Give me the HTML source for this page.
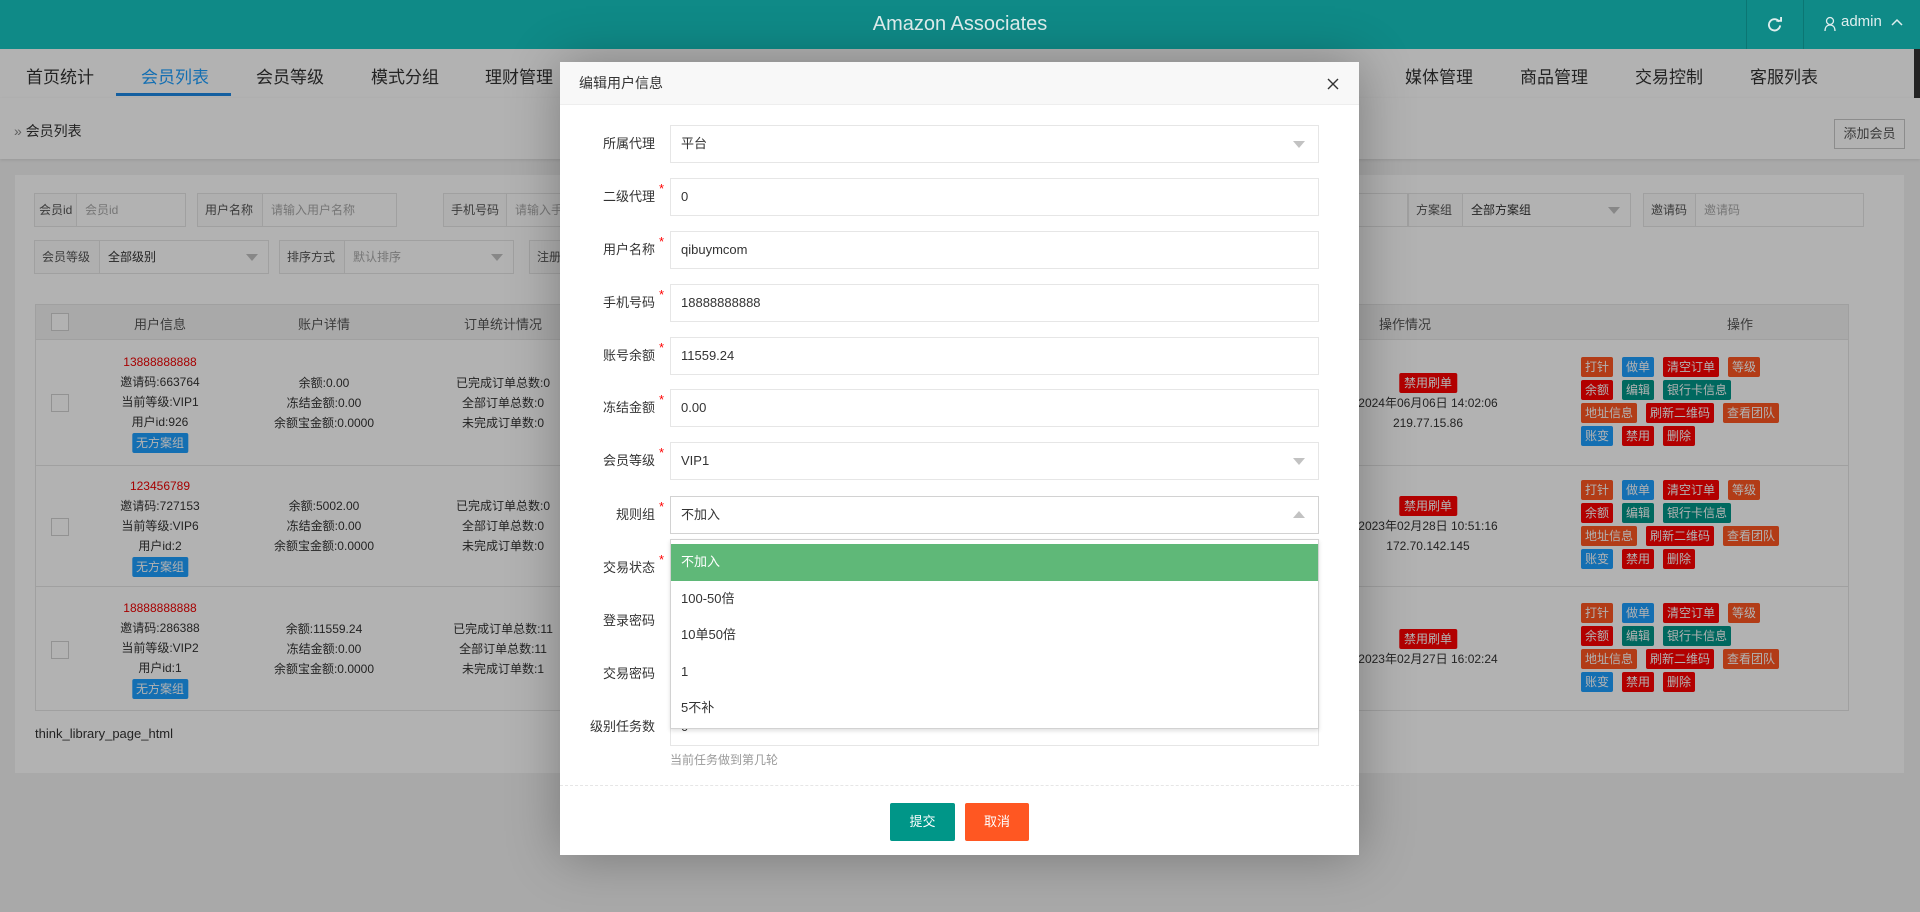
<!DOCTYPE html>
<html><head><meta charset="utf-8">
<style>
*{margin:0;padding:0;box-sizing:border-box}
body{width:1920px;height:912px;overflow:hidden;position:relative;background:#f2f2f2;font-family:"Liberation Sans","Noto Sans CJK SC",sans-serif;color:#333;font-size:13px}
.a{position:absolute}
.hdr{left:0;top:0;width:1920px;height:49px;background:#0f8a87;z-index:5}
.hdr .t{left:0;width:1920px;top:0;line-height:49px;text-align:center;color:#dfeeee;font-size:20px}
.sep{top:0;width:1px;height:49px;background:#0b7673}
.nav{left:0;top:49px;width:1920px;height:49px;background:#fff}
.nav span{position:absolute;top:14px;font-size:17px;color:#333}
.bc{left:0;top:98px;width:1920px;height:61px;background:#fff;box-shadow:0 1px 3px rgba(0,0,0,.1)}
.card{left:15px;top:175px;width:1889px;height:598px;background:#fff}
.f{height:34px;border:1px solid #e6e6e6;background:#fff;font-size:12px;white-space:nowrap}
.f .l{position:absolute;left:0;top:0;height:32px;line-height:32px;padding-left:7px;border-right:1px solid #e6e6e6;background:#fbfbfb;color:#555;white-space:nowrap;overflow:hidden}
.f .v{position:absolute;top:0;line-height:32px;color:#aaa}
.f .v.d{color:#333}
.tri{position:absolute;width:0;height:0;border-left:6px solid transparent;border-right:6px solid transparent;border-top:7px solid #c2c2c2}
.th{left:35px;top:304px;width:1814px;height:36px;background:#f2f2f2;border:1px solid #e6e6e6}
.th span{position:absolute;top:9px;font-size:13px;color:#555;transform:translateX(-50%)}
.row{left:35px;width:1814px;border:1px solid #e6e6e6;border-top:none}
.cb{position:absolute;left:15px;width:18px;height:18px;border:1px solid #d2d2d2;background:#fff}
.col{position:absolute;top:0;bottom:0;display:flex;flex-direction:column;justify-content:center;align-items:center;font-size:12px;line-height:20px;color:#333;transform:translateX(-50%);white-space:nowrap}
.btn{display:inline-block;height:20px;line-height:20px;padding:0 4px;color:#fff;font-size:12px;border-radius:2px}
.acts{position:absolute;left:1545px;top:0;bottom:0;display:flex;flex-direction:column;justify-content:center;width:220px}
.acts div{height:23px}
.acts .btn{margin-right:9px}
.o{background:#ff5722}.b{background:#1e9fff}.r{background:#f00}.g{background:#009688}
.shade{left:0;top:49px;width:1920px;height:863px;background:rgba(0,0,0,.3);z-index:3}
.modal{left:560px;top:62px;width:799px;height:793px;background:#fff;z-index:10;box-shadow:1px 1px 50px rgba(0,0,0,.3)}
.mt{left:0;top:0;width:799px;height:43px;background:#f8f8f8;border-bottom:1px solid #eee;line-height:43px;padding-left:19px;font-size:14px;color:#333}
.lab{position:absolute;right:704px;width:120px;text-align:right;font-size:13px;color:#333;line-height:38px}
.lab i{position:absolute;right:-9px;top:-8px;color:#f00;font-style:normal;font-size:13px}
.inp{position:absolute;left:110px;width:649px;height:38px;border:1px solid #e6e6e6;background:#fff;line-height:36px;padding-left:10px;font-size:13px;color:#333}
.dd{left:110px;top:477px;width:649px;height:190px;border:1px solid #d2d2d2;background:#fff;box-shadow:0 2px 4px rgba(0,0,0,.12);z-index:2}
.dd div{height:36.6px;line-height:36px;padding-left:10px;font-size:13px;color:#333}
</style></head><body>
<div class="a hdr">
 <div class="a t">Amazon Associates</div>
 <div class="a sep" style="left:1746px"></div>
 <div class="a sep" style="left:1803px"></div>
 <svg class="a" style="left:1767px;top:17px" width="15" height="15" viewBox="0 0 16 16"><path d="M13 5A6 6 0 1 0 14 9" fill="none" stroke="#dfeeee" stroke-width="2"/><path d="M10 4h5V-1" fill="none" stroke="#dfeeee" stroke-width="2"/></svg>
 <svg class="a" style="left:1824px;top:16px" width="12" height="16" viewBox="0 0 12 16"><circle cx="6" cy="5" r="3.5" fill="none" stroke="#dfeeee" stroke-width="1.3"/><path d="M1 15c0-4 2-6 5-6s5 2 5 6" fill="none" stroke="#dfeeee" stroke-width="1.3"/></svg>
 <div class="a" style="left:1841px;top:13px;color:#dfeeee;font-size:15px">admin</div>
 <svg class="a" style="left:1891px;top:18px" width="12" height="8" viewBox="0 0 12 8"><path d="M1 7L6 2l5 5" fill="none" stroke="#dfeeee" stroke-width="1.5"/></svg>
</div>
<div class="a nav">
 <span style="left:26px">首页统计</span>
 <span style="left:141px;color:#1e9fff">会员列表</span>
 <span style="left:256px">会员等级</span>
 <span style="left:371px">模式分组</span>
 <span style="left:485px">理财管理</span>
 <span style="left:1405px">媒体管理</span>
 <span style="left:1520px">商品管理</span>
 <span style="left:1635px">交易控制</span>
 <span style="left:1750px">客服列表</span>
 <div class="a" style="left:116px;top:44px;width:115px;height:3px;background:#1e88e5"></div>
 <div class="a" style="left:1914px;top:0;width:6px;height:50px;background:#333"></div>
</div>
<div class="a bc">
 <div class="a" style="left:14px;top:23px;font-size:14px;color:#333"><span style="color:#888">»</span> 会员列表</div>
 <div class="a" style="left:1834px;top:21px;width:71px;height:30px;border:1px solid #c9c9c9;line-height:28px;text-align:center;font-size:13px;color:#555">添加会员</div>
</div>
<div class="a card">
 <div class="a f" style="left:19px;top:18px;width:152px"><div class="l" style="width:42px;padding-left:4px">会员id</div><div class="v" style="left:50px">会员id</div></div>
 <div class="a f" style="left:182px;top:18px;width:200px"><div class="l" style="width:65px">用户名称</div><div class="v" style="left:73px">请输入用户名称</div></div>
 <div class="a f" style="left:428px;top:18px;width:200px"><div class="l" style="width:63px">手机号码</div><div class="v" style="left:71px">请输入手机号码</div></div>
 <div class="a f" style="left:1180px;top:18px;width:213px"></div>
 <div class="a f" style="left:1393px;top:18px;width:223px"><div class="l" style="width:54px">方案组</div><div class="v d" style="left:62px">全部方案组</div><div class="tri" style="left:199px;top:13px"></div></div>
 <div class="a f" style="left:1628px;top:18px;width:221px"><div class="l" style="width:52px">邀请码</div><div class="v" style="left:60px">邀请码</div></div>
 <div class="a f" style="left:19px;top:65px;width:235px"><div class="l" style="width:65px">会员等级</div><div class="v d" style="left:73px">全部级别</div><div class="tri" style="left:211px;top:13px"></div></div>
 <div class="a f" style="left:264px;top:65px;width:235px"><div class="l" style="width:65px">排序方式</div><div class="v" style="left:73px">默认排序</div><div class="tri" style="left:211px;top:13px"></div></div>
 <div class="a f" style="left:514px;top:65px;width:120px"><div class="l" style="width:65px">注册时间</div></div>
 <div class="a" style="left:20px;top:551px;font-size:13px;color:#333">think_library_page_html</div>
</div>
<div class="a th">
 <div class="cb" style="top:8px"></div>
 <span style="left:124px">用户信息</span><span style="left:288px">账户详情</span><span style="left:467px">订单统计情况</span><span style="left:1369px">操作情况</span><span style="left:1704px">操作</span>
</div>

<div class="a row" style="top:340px;height:126px">
 <div class="cb" style="top:54px"></div>
 <div class="col" style="left:124px"><div style="color:#e00">13888888888</div><div>邀请码:663764</div><div>当前等级:VIP1</div><div>用户id:926</div><div class="btn b" style="margin-top:1px">无方案组</div></div>
 <div class="col" style="left:288px"><div>余额:0.00</div><div>冻结金额:0.00</div><div>余额宝金额:0.0000</div></div>
 <div class="col" style="left:467px"><div>已完成订单总数:0</div><div>全部订单总数:0</div><div>未完成订单数:0</div></div>
 <div class="col" style="left:1392px"><div class="btn r" style="padding:0 5px">禁用刷单</div><div>2024年06月06日 14:02:06</div><div>219.77.15.86</div></div>
 <div class="acts"><div><span class="btn o">打针</span><span class="btn b">做单</span><span class="btn r">清空订单</span><span class="btn o">等级</span></div><div><span class="btn r">余额</span><span class="btn g">编辑</span><span class="btn g">银行卡信息</span></div><div><span class="btn o">地址信息</span><span class="btn r">刷新二维码</span><span class="btn o">查看团队</span></div><div><span class="btn b">账变</span><span class="btn r">禁用</span><span class="btn r">删除</span></div></div>
</div>
<div class="a row" style="top:466px;height:121px">
 <div class="cb" style="top:52px"></div>
 <div class="col" style="left:124px"><div style="color:#e00">123456789</div><div>邀请码:727153</div><div>当前等级:VIP6</div><div>用户id:2</div><div class="btn b" style="margin-top:1px">无方案组</div></div>
 <div class="col" style="left:288px"><div>余额:5002.00</div><div>冻结金额:0.00</div><div>余额宝金额:0.0000</div></div>
 <div class="col" style="left:467px"><div>已完成订单总数:0</div><div>全部订单总数:0</div><div>未完成订单数:0</div></div>
 <div class="col" style="left:1392px"><div class="btn r" style="padding:0 5px">禁用刷单</div><div>2023年02月28日 10:51:16</div><div>172.70.142.145</div></div>
 <div class="acts"><div><span class="btn o">打针</span><span class="btn b">做单</span><span class="btn r">清空订单</span><span class="btn o">等级</span></div><div><span class="btn r">余额</span><span class="btn g">编辑</span><span class="btn g">银行卡信息</span></div><div><span class="btn o">地址信息</span><span class="btn r">刷新二维码</span><span class="btn o">查看团队</span></div><div><span class="btn b">账变</span><span class="btn r">禁用</span><span class="btn r">删除</span></div></div>
</div>
<div class="a row" style="top:587px;height:124px">
 <div class="cb" style="top:54px"></div>
 <div class="col" style="left:124px"><div style="color:#e00">18888888888</div><div>邀请码:286388</div><div>当前等级:VIP2</div><div>用户id:1</div><div class="btn b" style="margin-top:1px">无方案组</div></div>
 <div class="col" style="left:288px"><div>余额:11559.24</div><div>冻结金额:0.00</div><div>余额宝金额:0.0000</div></div>
 <div class="col" style="left:467px"><div>已完成订单总数:11</div><div>全部订单总数:11</div><div>未完成订单数:1</div></div>
 <div class="col" style="left:1392px"><div class="btn r" style="padding:0 5px">禁用刷单</div><div>2023年02月27日 16:02:24</div></div>
 <div class="acts"><div><span class="btn o">打针</span><span class="btn b">做单</span><span class="btn r">清空订单</span><span class="btn o">等级</span></div><div><span class="btn r">余额</span><span class="btn g">编辑</span><span class="btn g">银行卡信息</span></div><div><span class="btn o">地址信息</span><span class="btn r">刷新二维码</span><span class="btn o">查看团队</span></div><div><span class="btn b">账变</span><span class="btn r">禁用</span><span class="btn r">删除</span></div></div>
</div>

<div class="a shade"></div>

<div class="a modal">
 <div class="a mt">编辑用户信息</div>
 <svg class="a" style="left:767px;top:16px" width="12" height="12" viewBox="0 0 12 12"><path d="M1 1l10 10M11 1L1 11" stroke="#333" stroke-width="1.4"/></svg>
 <div class="lab" style="top:63px">所属代理</div><div class="inp" style="top:63px">平台<div class="tri" style="left:622px;top:15px"></div></div>
 <div class="lab" style="top:116px">二级代理<i>*</i></div><div class="inp" style="top:116px">0</div>
 <div class="lab" style="top:169px">用户名称<i>*</i></div><div class="inp" style="top:169px">qibuymcom</div>
 <div class="lab" style="top:222px">手机号码<i>*</i></div><div class="inp" style="top:222px">18888888888</div>
 <div class="lab" style="top:275px">账号余额<i>*</i></div><div class="inp" style="top:275px">11559.24</div>
 <div class="lab" style="top:327px">冻结金额<i>*</i></div><div class="inp" style="top:327px">0.00</div>
 <div class="lab" style="top:380px">会员等级<i>*</i></div><div class="inp" style="top:380px">VIP1<div class="tri" style="left:622px;top:15px"></div></div>
 <div class="lab" style="top:434px">规则组<i>*</i></div><div class="inp" style="top:434px;border-color:#d2d2d2">不加入<div class="tri" style="left:622px;top:14px;border-top:none;border-bottom:7px solid #c2c2c2"></div></div>
 <div class="lab" style="top:487px">交易状态<i>*</i></div>
 <div class="lab" style="top:540px">登录密码</div>
 <div class="lab" style="top:593px">交易密码</div>
 <div class="lab" style="top:646px">级别任务数</div><div class="inp" style="top:646px">0</div>
 <div class="a" style="left:110px;top:689px;font-size:12px;color:#999">当前任务做到第几轮</div>
 <div class="a dd"><div style="background:#5fb878;color:#fff;margin-top:4px">不加入</div><div>100-50倍</div><div>10单50倍</div><div>1</div><div>5不补</div></div>
 <div class="a" style="left:0;top:723px;width:799px;border-top:1px dashed #e6e6e6"></div>
 <div class="a" style="left:330px;top:741px;width:65px;height:38px;background:#009688;color:#fff;line-height:38px;text-align:center;font-size:13px;border-radius:2px">提交</div>
 <div class="a" style="left:405px;top:741px;width:64px;height:38px;background:#ff5722;color:#fff;line-height:38px;text-align:center;font-size:13px;border-radius:2px">取消</div>
</div>
</body></html>
